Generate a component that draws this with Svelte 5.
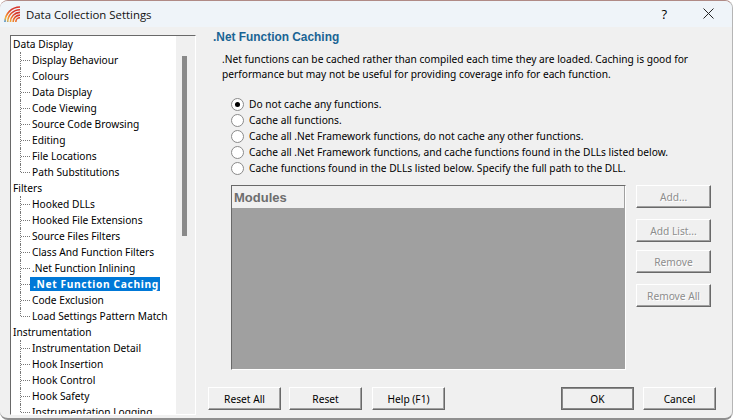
<script>
  const sections = [
    { title: 'Data Display', items: ['Display Behaviour', 'Colours', 'Data Display', 'Code Viewing', 'Source Code Browsing', 'Editing', 'File Locations', 'Path Substitutions'] },
    { title: 'Filters', items: ['Hooked DLLs', 'Hooked File Extensions', 'Source Files Filters', 'Class And Function Filters', '.Net Function Inlining', '.Net Function Caching', 'Code Exclusion', 'Load Settings Pattern Match'] },
    { title: 'Instrumentation', items: ['Instrumentation Detail', 'Hook Insertion', 'Hook Control', 'Hook Safety', 'Instrumentation Logging'] }
  ];
  const options = [
    'Do not cache any functions.',
    'Cache all functions.',
    'Cache all .Net Framework functions, do not cache any other functions.',
    'Cache all .Net Framework functions, and cache functions found in the DLLs listed below.',
    'Cache functions found in the DLLs listed below. Specify the full path to the DLL.'
  ];
  let selected = $state(0);
  let current = $state('.Net Function Caching');
  const arcs = [0, 1, 2, 3, 4];
</script>

<div class="window">
  <header class="titlebar">
    <svg class="app-icon" width="17" height="17" viewBox="0 0 17 17" fill="none">
      <defs>
        <linearGradient id="rainbow" gradientUnits="userSpaceOnUse" x1="15" y1="1" x2="1" y2="16">
          <stop offset="0.35" stop-color="#d8362c" />
          <stop offset="0.65" stop-color="#f0792c" />
          <stop offset="0.85" stop-color="#f2b33a" />
          <stop offset="1" stop-color="#3f8fd6" />
        </linearGradient>
      </defs>
      {#each arcs as i}
        <path d="M{1 + i * 2.7} 16 A{15 - i * 2.7} {15 - i * 2.7} 0 0 1 16 {1 + i * 2.7}" stroke="url(#rainbow)" stroke-width="1.6" />
      {/each}
    </svg>
    <span class="title">Data Collection Settings</span>
    <span class="help">?</span>
    <svg class="close" width="11" height="11" viewBox="0 0 11 11"><path d="M.5.5l10 10M10.5.5l-10 10" stroke="#222" fill="none" /></svg>
  </header>

  <div class="content">
    <div class="tree">
      <div class="tree-list">
        {#each sections as section}
          <div class="root">{section.title}</div>
          {#each section.items as item, i}
            <button class="node" class:last={i === section.items.length - 1} onclick={() => (current = item)}>
              <span class="label" class:active={current === item && section.title !== 'Data Display'}>{item}</span>
            </button>
          {/each}
        {/each}
      </div>
      <div class="scrollbar"><div class="thumb"></div></div>
    </div>

    <main class="pane">
      <h1>.Net Function Caching</h1>
      <p class="desc">.Net functions can be cached rather than compiled each time they are loaded. Caching is good for performance but may not be useful for providing coverage info for each function.</p>

      <div class="options">
        {#each options as option, i}
          <label class="radio">
            <input type="radio" name="cache" checked={selected === i} onchange={() => (selected = i)} />
            <span class="dot"></span>
            <span>{option}</span>
          </label>
        {/each}
      </div>

      <div class="modules-row">
        <div class="modules">
          <div class="modules-head">Modules</div>
          <div class="modules-body"></div>
        </div>
        <div class="side-buttons">
          <button class="btn disabled" disabled>Add...</button>
          <button class="btn disabled gap-a" disabled>Add List...</button>
          <button class="btn disabled gap-b" disabled>Remove</button>
          <button class="btn disabled gap-a" disabled>Remove All</button>
        </div>
      </div>

      <footer class="footer">
        <button class="btn">Reset All</button>
        <button class="btn">Reset</button>
        <button class="btn help-btn">Help (F1)</button>
        <button class="btn primary">OK</button>
        <button class="btn cancel">Cancel</button>
      </footer>
    </main>
  </div>
</div>

<style>
  :global(body) {
    margin: 0;
    background: #fff;
  }

  .window {
    width: 733px;
    height: 420px;
    box-sizing: border-box;
    display: flex;
    flex-direction: column;
    overflow: hidden;
    background: #f0f0f0;
    border-radius: 8px;
    border-top: 1px solid #b08a86;
    border-right: 1px solid #b5b5b5;
    border-bottom: 2px solid #8f8f8f;
    font-family: "Noto Sans", Arial, sans-serif;
    font-size: 10.2px;
    color: #000;
  }

  .titlebar {
    height: 26px;
    flex: none;
    display: flex;
    align-items: center;
    padding-left: 4px;
    background: #eff4f9;
  }

  .title {
    margin-left: 5px;
    font-family: "Open Sans", sans-serif;
    font-size: 11.4px;
    color: #111;
    flex: 1;
  }

  .help {
    font-family: "Open Sans", sans-serif;
    font-size: 13px;
    margin-right: 36px;
  }

  .close {
    margin-right: 18px;
    margin-bottom: 2px;
  }

  .content {
    flex: 1;
    min-height: 0;
    display: flex;
    padding: 3px 16px 0 10px;
  }

  .tree {
    width: 186px;
    height: 380px;
    margin-top: 5px;
    box-sizing: border-box;
    display: flex;
    overflow: hidden;
    background: #fff;
    border: 1px solid;
    border-color: #696969 #fff #fff #696969;
    flex: none;
  }

  .tree-list {
    flex: 1;
    min-width: 0;
  }

  .root,
  .node {
    height: 16px;
    line-height: 16px;
    white-space: nowrap;
  }

  .root {
    padding-left: 2px;
  }

  .node {
    display: block;
    position: relative;
    width: 100%;
    padding: 0 0 0 20px;
    border: 0;
    background: none;
    font: inherit;
    text-align: left;
    color: inherit;
  }

  .node::before {
    content: "";
    position: absolute;
    left: 9px;
    top: 0;
    bottom: 0;
    border-left: 1px dotted #777;
  }

  .node.last::before {
    bottom: 8px;
  }

  .node::after {
    content: "";
    position: absolute;
    left: 10px;
    width: 9px;
    top: 8px;
    border-top: 1px dotted #777;
  }

  .label {
    display: inline-block;
    padding: 0 1px;
  }

  .label.active {
    margin-left: -1px;
    padding: 0 1px 0 3px;
    background: #0078d7;
    color: #fff;
    font-weight: 700;
    letter-spacing: 0.65px;
  }

  .scrollbar {
    width: 19px;
    flex: none;
    background: #f0f0f0;
    padding-top: 20px;
    box-sizing: border-box;
  }

  .thumb {
    width: 5px;
    height: 180px;
    margin-left: 6px;
    background: #8a8a8a;
  }

  .pane {
    flex: 1;
    min-width: 0;
    display: flex;
    flex-direction: column;
    padding-left: 12px;
  }

  h1 {
    margin: 0;
    font-family: "Liberation Sans", Arial, sans-serif;
    font-size: 11.9px;
    line-height: 14px;
    font-weight: 700;
    color: #1a6494;
    padding-left: 5px;
  }

  .desc {
    margin: 8px 0 0;
    padding-left: 14px;
    width: 480px;
    line-height: 15px;
  }

  .options {
    margin-top: 14px;
    padding-left: 23px;
    display: flex;
    flex-direction: column;
  }

  .radio {
    height: 16px;
    display: flex;
    align-items: center;
    gap: 5px;
  }

  .radio input {
    position: absolute;
    opacity: 0;
    width: 0;
    height: 0;
    margin: 0;
  }

  .dot {
    width: 11px;
    height: 11px;
    border-radius: 50%;
    background: #fff;
    border: 1px solid #8a8a8a;
    flex: none;
    position: relative;
  }

  .radio input:checked + .dot::after {
    content: "";
    position: absolute;
    left: 3px;
    top: 3px;
    width: 5px;
    height: 5px;
    border-radius: 50%;
    background: #000;
  }

  .modules-row {
    display: flex;
    margin-top: 9px;
    padding-left: 23px;
  }

  .modules {
    width: 395px;
    height: 185px;
    box-sizing: border-box;
    display: flex;
    flex-direction: column;
    border: 1px solid;
    border-color: #696969 #fff #fff #696969;
  }

  .modules-head {
    height: 22px;
    line-height: 23px;
    padding-left: 2px;
    background: #f0f0f0;
    border-right: 1px solid #a0a0a0;
    font-family: "Liberation Sans", Arial, sans-serif;
    font-size: 13px;
    font-weight: 700;
    color: #6d6d6d;
  }

  .modules-body {
    flex: 1;
    background: #a0a0a0;
  }

  .side-buttons {
    display: flex;
    flex-direction: column;
    margin-left: 10px;
  }

  .btn {
    width: 75px;
    height: 23px;
    box-sizing: border-box;
    padding: 0;
    background: #f0f0f0;
    border: 1px solid;
    border-color: #fff #696969 #696969 #fff;
    box-shadow: inset -1px -1px 0 #a0a0a0;
    font: inherit;
    color: #000;
  }

  .btn.disabled {
    color: #8d8d8d;
    text-shadow: 1px 1px 0 #fff;
  }

  .gap-a {
    margin-top: 11px;
  }

  .gap-b {
    margin-top: 8px;
  }

  .footer {
    display: flex;
    gap: 8px;
    margin-top: 17px;
  }

  .footer .btn {
    width: 74px;
  }

  .footer .help-btn {
    margin-left: 2px;
    margin-right: 108px;
  }

  .footer .cancel {
    margin-left: 1px;
  }

  .footer .primary {
    border-color: #696969;
    box-shadow: inset 0 0 0 1px #8a8a8a;
  }
</style>
